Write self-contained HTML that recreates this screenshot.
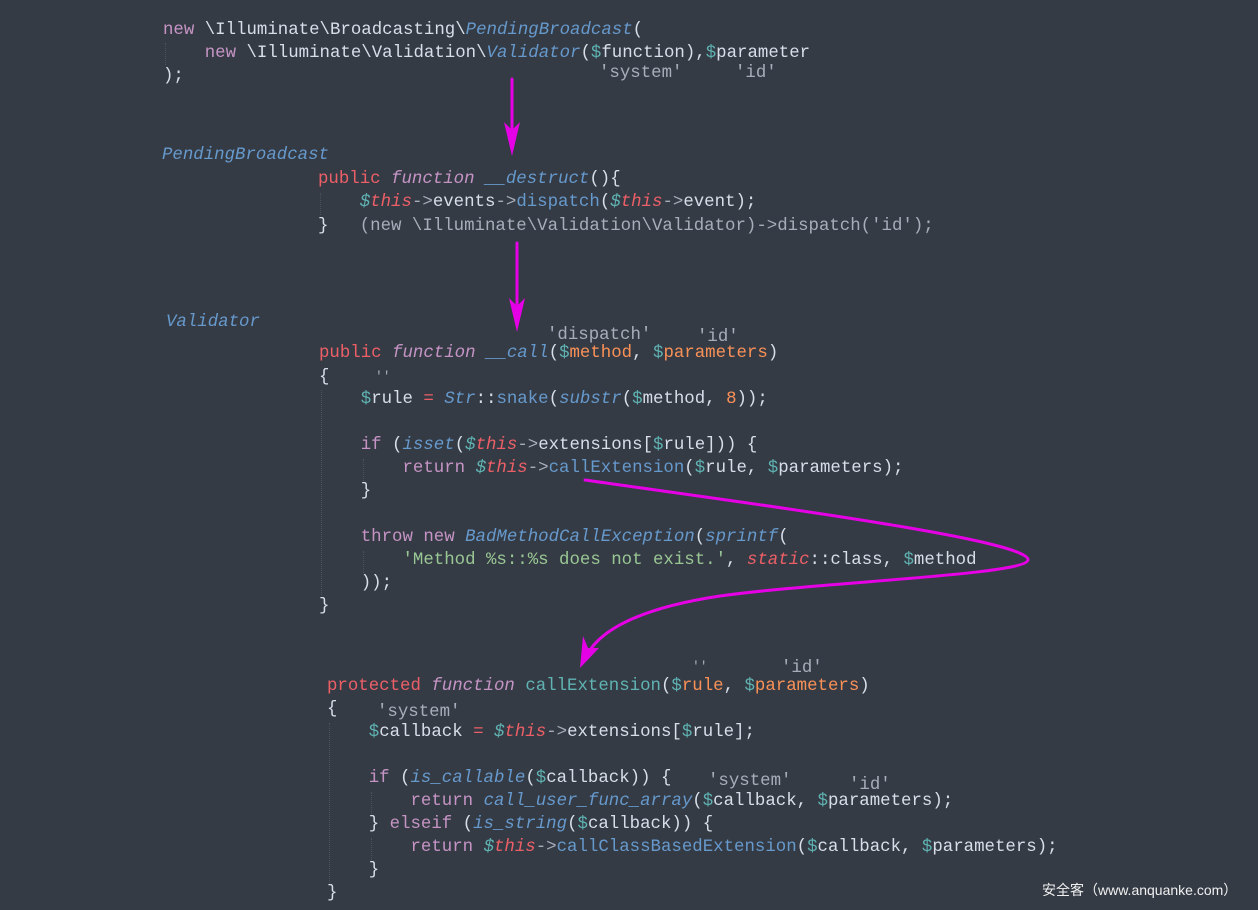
<!DOCTYPE html>
<html><head><meta charset="utf-8"><style>
html,body{margin:0;padding:0;width:1258px;height:910px;background:#353b45;overflow:hidden}
#w{position:absolute;left:0;top:3px;width:1258px;height:907px}
.l{position:absolute;white-space:pre;font-family:"Liberation Mono",monospace;font-size:17.4px;line-height:23px;color:#d8dee9}
.k{color:#c594c5}.r{color:#ec5f67}.f{color:#c594c5;font-style:italic}.v{color:#5fb3b3}.m{color:#6699cc}.i{font-style:italic}
.s{color:#99c794}.n{color:#f99157}.o{color:#f99157}.g{color:#a7adba}.t{color:#ec5f67;font-style:italic}
.wm{position:absolute;left:1042px;top:880px;color:#f0f0f0;font:14px "Liberation Sans","Noto Sans CJK SC",sans-serif}
.gd{position:absolute;border-left:1px dotted #4b525e}
</style></head><body>
<div id="w">
<div class="gd" style="left:165px;top:40px;height:22px"></div>
<div class="gd" style="left:320px;top:190px;height:22px"></div>
<div class="gd" style="left:321px;top:387px;height:205px"></div>
<div class="gd" style="left:363px;top:456px;height:22px"></div>
<div class="gd" style="left:363px;top:548px;height:22px"></div>
<div class="gd" style="left:329px;top:720px;height:160px"></div>
<div class="gd" style="left:371px;top:789px;height:22px"></div>
<div class="gd" style="left:371px;top:835px;height:22px"></div>

<div class="l" style="left:163px;top:16px"><span class="k">new</span> \Illuminate\Broadcasting\<span class="m i">PendingBroadcast</span>(</div>
<div class="l" style="left:163px;top:39px">    <span class="k">new</span> \Illuminate\Validation\<span class="m i">Validator</span>(<span class="v">$</span>function),<span class="v">$</span>parameter</div>
<div class="l" style="left:163px;top:62px">);</div>
<div class="l g" style="left:599px;top:59px">'system'</div>
<div class="l g" style="left:735px;top:59px">'id'</div>

<div class="l m i" style="left:162px;top:141px">PendingBroadcast</div>
<div class="l" style="left:318px;top:165px"><span class="r">public</span> <span class="f">function</span> <span class="m i">__destruct</span>(){</div>
<div class="l" style="left:318px;top:188px">    <span class="v i">$</span><span class="t">this</span><span class="g">-&gt;</span>events<span class="g">-&gt;</span><span class="m">dispatch</span>(<span class="v i">$</span><span class="t">this</span><span class="g">-&gt;</span>event);</div>
<div class="l" style="left:318px;top:212px">}   <span class="g">(new \Illuminate\Validation\Validator)-&gt;dispatch('id');</span></div>

<div class="l m i" style="left:166px;top:308px">Validator</div>
<div class="l g" style="left:547px;top:321px">'dispatch'</div>
<div class="l g" style="left:697px;top:323px">'id'</div>
<div class="l" style="left:319px;top:339px"><span class="r">public</span> <span class="f">function</span> <span class="m i">__call</span>(<span class="v">$</span><span class="o">method</span>, <span class="v">$</span><span class="o">parameters</span>)</div>
<div class="l" style="left:319px;top:363px">{</div>
<div class="l g" style="left:375px;top:362px;font-size:13px">''</div>
<div class="l" style="left:319px;top:385px">    <span class="v">$</span>rule <span class="r">=</span> <span class="m i">Str</span>::<span class="m">snake</span>(<span class="m i">substr</span>(<span class="v">$</span>method, <span class="n">8</span>));</div>
<div class="l" style="left:319px;top:431px">    <span class="k">if</span> (<span class="m i">isset</span>(<span class="v i">$</span><span class="t">this</span><span class="g">-&gt;</span>extensions[<span class="v">$</span>rule])) {</div>
<div class="l" style="left:319px;top:454px">        <span class="k">return</span> <span class="v i">$</span><span class="t">this</span><span class="g">-&gt;</span><span class="m">callExtension</span>(<span class="v">$</span>rule, <span class="v">$</span>parameters);</div>
<div class="l" style="left:319px;top:477px">    }</div>
<div class="l" style="left:319px;top:523px">    <span class="k">throw</span> <span class="k">new</span> <span class="m i">BadMethodCallException</span>(<span class="m i">sprintf</span>(</div>
<div class="l" style="left:319px;top:546px">        <span class="s">'Method %s::%s does not exist.'</span>, <span class="t">static</span>::class, <span class="v">$</span>method</div>
<div class="l" style="left:319px;top:569px">    ));</div>
<div class="l" style="left:319px;top:592px">}</div>

<div class="l g" style="left:692px;top:652px;font-size:13px">''</div>
<div class="l g" style="left:781px;top:654px">'id'</div>
<div class="l" style="left:327px;top:672px"><span class="r">protected</span> <span class="f">function</span> <span class="v">callExtension</span>(<span class="v">$</span><span class="o">rule</span>, <span class="v">$</span><span class="o">parameters</span>)</div>
<div class="l" style="left:327px;top:695px">{</div>
<div class="l g" style="left:377px;top:698px">'system'</div>
<div class="l" style="left:327px;top:718px">    <span class="v">$</span>callback <span class="r">=</span> <span class="v i">$</span><span class="t">this</span><span class="g">-&gt;</span>extensions[<span class="v">$</span>rule];</div>
<div class="l" style="left:327px;top:764px">    <span class="k">if</span> (<span class="m i">is_callable</span>(<span class="v">$</span>callback)) {</div>
<div class="l g" style="left:708px;top:767px">'system'</div>
<div class="l g" style="left:849px;top:771px">'id'</div>
<div class="l" style="left:327px;top:787px">        <span class="k">return</span> <span class="m i">call_user_func_array</span>(<span class="v">$</span>callback, <span class="v">$</span>parameters);</div>
<div class="l" style="left:327px;top:810px">    } <span class="k">elseif</span> (<span class="m i">is_string</span>(<span class="v">$</span>callback)) {</div>
<div class="l" style="left:327px;top:833px">        <span class="k">return</span> <span class="v i">$</span><span class="t">this</span><span class="g">-&gt;</span><span class="m">callClassBasedExtension</span>(<span class="v">$</span>callback, <span class="v">$</span>parameters);</div>
<div class="l" style="left:327px;top:856px">    }</div>
<div class="l" style="left:327px;top:879px">}</div>
</div>

<svg width="1258" height="910" style="position:absolute;left:0;top:0" fill="none">
<g stroke="#e600e6" stroke-width="3" stroke-linecap="round">
<line x1="512" y1="79" x2="512" y2="140"/>
<line x1="517" y1="243" x2="517" y2="315"/>
<path d="M585,480 C760,505 1030,540 1028,560 C1025,575 820,582 720,596 C640,608 600,630 587,655"/>
</g>
<g fill="#e600e6">
<path d="M504,122 L512,156 L520,122 L512,130 Z"/>
<path d="M509,298 L517,332 L525,298 L517,306 Z"/>
<path d="M580,668 L583,636 L588,648 L599,648 Z"/>
</g>
</svg>
<div class="wm">安全客（www.anquanke.com）</div>
</body></html>
